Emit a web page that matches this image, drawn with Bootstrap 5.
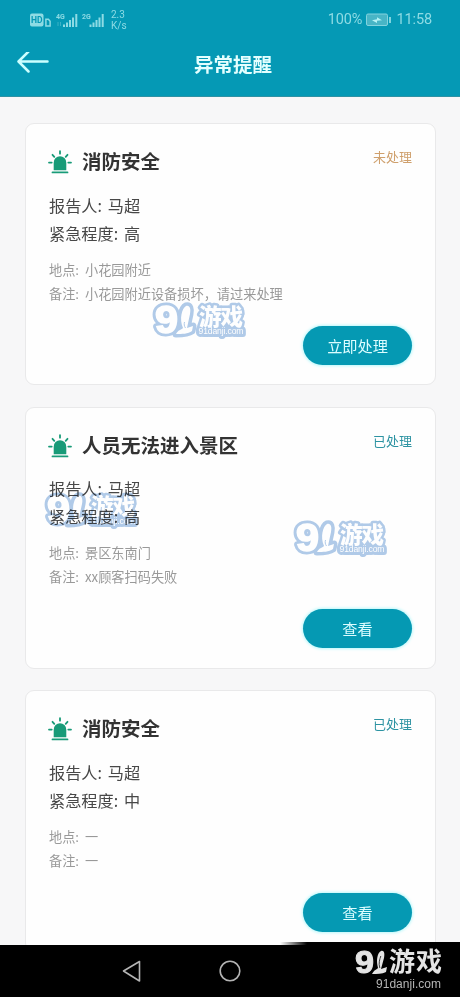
<!DOCTYPE html>
<html lang="zh-CN">
<head>
<meta charset="utf-8">
<meta name="viewport" content="width=device-width, initial-scale=1">
<title>异常提醒</title>
<link href="https://cdn.jsdelivr.net/npm/bootstrap@5.3.0/dist/css/bootstrap.min.css" rel="stylesheet">
<style>
  body { font-family: "Noto Sans CJK SC", sans-serif; background: #f7f7f8; color: #444; }
  .screen { width: 460px; height: 997px; }
  .app-header { height: 97px; background: #0599b5; border-bottom: 1px solid #2f92a4; flex: none; }
  .status-strip { height: 40px; padding: 0 28px 0 30px; font-family: Roboto, sans-serif; color: #8edbe4; }
  .net-speed { font-size: 10px; line-height: 11.5px; margin-left: 7px; }
  .clock { font-size: 14.5px; line-height: 20px; letter-spacing: -.1px; }
  .title-bar { display: grid; grid-template-columns: 60px 1fr 54px; height: 50px; }
  .page-title { font-size: 19.5px; font-weight: 700; color: #e4ffff; line-height: 48px; }
  .feed { padding: 26px 24.5px 0; gap: 21.5px; min-height: 0; }
  .alert-card { height: 262px; flex: none; border: 1px solid #e9e9ea; border-radius: 9px; padding: 22px 22.5px 19.5px 23.5px; background: #fefefe; }
  .card-head { height: 30px; }
  .siren { margin: 4px 0 0 -1px; }
  .head-title { font-size: 19.5px; font-weight: 700; line-height: 30px; color: #333; margin-left: 10px; }
  .state { font-size: 13px; line-height: 21px; color: #2d93a2; }
  .state-open { color: #cfa06d; }
  .info { font-size: 16.2px; line-height: 28.4px; margin-top: 14.5px; word-spacing: 2px; color: #484848; }
  .detail { font-size: 13.2px; line-height: 24.4px; margin-top: 10.2px; word-spacing: 3px; color: #999; }
  .action { width: 109px; height: 39px; background: #0599b3; color: #dcfdff; border: 0; border-radius: 20px; font-size: 15.2px; line-height: 39px; padding: 0; box-shadow: 0 0 3px 1px #b9f8fb; }
  .action:hover { background: #0589a2; color: #fff; }
  .system-nav { height: 52px; background: #000; flex: none; }
  .stamp { position: absolute; mix-blend-mode: multiply; }
  .stamp-a { left: 150px; top: 300px; }
  .stamp-b { left: 42px; top: 490px; }
  .stamp-c { left: 291px; top: 518px; }
  .corner-brand { position: absolute; left: 280px; top: 941px; }
</style>
</head>
<body>
<svg width="0" height="0" class="position-absolute">
  <defs>
    <symbol id="siren" viewBox="0 0 24 24">
      <path d="M5.700 20.300v-7.600a6.300 6.500 0 0 1 12.600 0v7.600z" fill="#189b78"/>
      <path d="M4.500 22.400h15M1 12.600h2.700M20.300 12.600H23M12 1.200v2.500M4.500 4.800l1.800 2M19.500 4.800l-1.800 2" fill="none" stroke="#189b78" stroke-width="1.800" stroke-linecap="round"/>
    </symbol>
    <symbol id="brand-stamp" viewBox="0 0 98 42">
      <g fill="#b1cbe9" stroke="#b1cbe9" stroke-width="7" stroke-linejoin="round" font-weight="900">
        <text x="5" y="33" font-size="38" font-family="Liberation Sans, sans-serif" font-weight="700" textLength="23" lengthAdjust="spacingAndGlyphs">9</text>
        <path d="M36 6c4-1 5 3 4 8l-3 14 6-2-1 5c-4 3-10 3-16 3 2-4 5-4 7-6-4-9-1-20 3-22z"/>
        <text x="49" y="25" font-size="22.500" textLength="44" font-family="Noto Sans CJK SC, sans-serif" stroke-width="5">游戏</text>
        <text x="48.500" y="34" font-size="8.600" font-weight="400" stroke-width="6" textLength="45" font-family="Liberation Sans, sans-serif">91danji.com</text>
      </g>
      <g fill="#fff" font-weight="900">
        <text x="5" y="33" font-size="38" font-family="Liberation Sans, sans-serif" font-weight="700" stroke="#fff" stroke-width="1.600" textLength="23" lengthAdjust="spacingAndGlyphs">9</text>
        <path d="M36 6c4-1 5 3 4 8l-3 14 6-2-1 5c-4 3-10 3-16 3 2-4 5-4 7-6-4-9-1-20 3-22z"/>
        <text x="49" y="25" font-size="22.500" textLength="44" font-family="Noto Sans CJK SC, sans-serif">游戏</text>
        <text x="48.500" y="34" font-size="8.600" font-weight="400" textLength="45" font-family="Liberation Sans, sans-serif">91danji.com</text>
      </g>
      <path d="M35.500 28c-1.500-2-1.500-4-1-6" fill="none" stroke="#b1cbe9"/>
    </symbol>
  </defs>
</svg>

<div class="screen position-relative overflow-hidden d-flex flex-column">
  <header class="app-header">
    <div class="status-strip d-flex align-items-center justify-content-between">
      <div class="d-flex align-items-center">
        <svg width="74" height="18" viewBox="0 0 74 18" fill="#8edbe4" font-family="Roboto, sans-serif" font-weight="700">
          <rect y="2.500" width="13.500" height="13" rx="2"/>
          <text x="1" y="12.200" font-size="8.500" fill="#0599b5">HD</text>
          <path d="M15.900 8.300h2.500l1.700 2v4.700h-4.200z" fill="none" stroke="#8edbe4" stroke-width="1.500"/>
          <text x="26" y="8" font-size="7">4G</text>
          <path d="M28 11v4M30.500 11v4" stroke="#48b9ca" stroke-width=".8"/>
          <path d="M33 13.500h2V16h-2zM36 11.500h2V16h-2zM39 9h2v7h-2zM42 6.500h2V16h-2zM45.300 3h2v13h-2z"/>
          <text x="52" y="8" font-size="7">2G</text>
          <path d="M59.500 13.500h2V16h-2zM62.500 11.500h2V16h-2zM65.500 9h2v7h-2zM68.500 6.500h2V16h-2zM71.700 3h2v13h-2z"/>
        </svg>
        <div class="net-speed">2.3<br>K/s</div>
      </div>
      <div class="clock d-flex align-items-center">
        <span>100%</span>
        <svg class="mx-1" width="26" height="14" viewBox="0 0 26 14">
          <rect x=".5" y="1" width="21" height="11.500" rx="1.500" fill="#48b5c6" stroke="#82d3de"/>
          <path d="M6 7.300l5-1V4.200l5 3-5 .500V10z" fill="#b5f2f5"/>
          <path d="M24 4v6" stroke="#8edbe4" stroke-width="1.800"/>
        </svg>
        <span>11:58</span>
      </div>
    </div>
    <div class="title-bar">
      <div class="d-flex align-items-center ps-3">
        <svg width="34" height="26" viewBox="0 0 34 26" fill="none" stroke="#cbffff" stroke-width="2.500" stroke-linecap="round" stroke-linejoin="round"><path d="M31.500 9.500H3M12.500-.5L2.500 9.500l10 10"/></svg>
      </div>
      <div class="page-title text-center">异常提醒</div>
    </div>
  </header>

  <main class="feed d-flex flex-column flex-grow-1 overflow-hidden">
    <article class="alert-card d-flex flex-column">
      <div class="card-head d-flex">
        <svg class="siren" width="24" height="24"><use href="#siren"/></svg>
        <h2 class="head-title mb-0">消防安全</h2>
        <span class="state state-open ms-auto">未处理</span>
      </div>
      <div class="info">报告人: 马超<br>紧急程度: 高</div>
      <div class="detail">地点: 小花园附近<br>备注: 小花园附近设备损坏，请过来处理</div>
      <button class="btn action align-self-end mt-auto">立即处理</button>
    </article>
    <article class="alert-card d-flex flex-column">
      <div class="card-head d-flex">
        <svg class="siren" width="24" height="24"><use href="#siren"/></svg>
        <h2 class="head-title mb-0">人员无法进入景区</h2>
        <span class="state ms-auto">已处理</span>
      </div>
      <div class="info">报告人: 马超<br>紧急程度: 高</div>
      <div class="detail">地点: 景区东南门<br>备注: xx顾客扫码失败</div>
      <button class="btn action align-self-end mt-auto">查看</button>
    </article>
    <article class="alert-card d-flex flex-column">
      <div class="card-head d-flex">
        <svg class="siren" width="24" height="24"><use href="#siren"/></svg>
        <h2 class="head-title mb-0">消防安全</h2>
        <span class="state ms-auto">已处理</span>
      </div>
      <div class="info">报告人: 马超<br>紧急程度: 中</div>
      <div class="detail">地点: 一<br>备注: 一</div>
      <button class="btn action align-self-end mt-auto">查看</button>
    </article>
  </main>

  <footer class="system-nav d-flex align-items-center">
    <svg width="460" height="52" viewBox="0 0 460 52" fill="none" stroke="#b4b4b4" stroke-width="1.600" stroke-linejoin="round">
      <path d="M139.500 16.500v19.500L123.500 26z"/>
      <circle cx="230" cy="26" r="9.800"/>
    </svg>
  </footer>

  <svg class="stamp stamp-a" width="98" height="42"><use href="#brand-stamp"/></svg>
  <svg class="stamp stamp-b" width="98" height="42"><use href="#brand-stamp"/></svg>
  <svg class="stamp stamp-c" width="98" height="42"><use href="#brand-stamp"/></svg>

  <svg class="corner-brand" width="180" height="56" viewBox="0 0 180 56" fill="#e4e4e4">
    <defs><linearGradient id="edge"><stop offset="0" stop-opacity="0"/><stop offset=".15"/></linearGradient></defs>
    <rect y="1" width="180" height="55" fill="url(#edge)"/>
    <text x="75" y="32" font-size="32" font-weight="700" stroke="#e4e4e4" font-family="Liberation Sans, sans-serif" textLength="19" lengthAdjust="spacingAndGlyphs">9</text>
    <path d="M101 10c3-1 4 2 3 7l-3 11 6-2-1 5c-4 2-9 2-14 2 2-4 4-4 6-6-2-7-1-15 3-17z"/>
    <path d="M99.800 27c-1.500-5 0-9 1-12" fill="none" stroke="#111" stroke-width=".8"/>
    <text x="109" y="30" font-size="26" font-weight="700" textLength="53" font-family="Noto Sans CJK SC, sans-serif">游戏</text>
    <text x="96" y="46.500" font-size="12" fill="#b5b5b5" textLength="65" font-family="Liberation Sans, sans-serif">91danji.com</text>
  </svg>
</div>
<script src="https://cdn.jsdelivr.net/npm/bootstrap@5.3.0/dist/js/bootstrap.bundle.min.js"></script>
</body>
</html>
